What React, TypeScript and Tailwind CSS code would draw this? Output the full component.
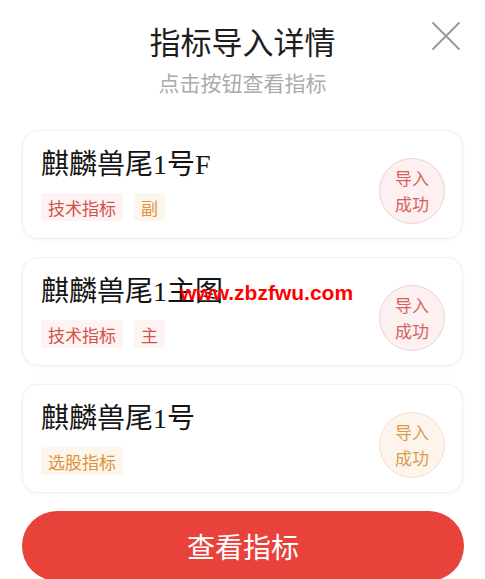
import type { ReactNode } from "react";

type Tone = "red" | "orange";

interface IndicatorItem {
	name: ReactNode;
	tags: { label: string; tone: Tone }[];
	status: Tone;
}

const items: IndicatorItem[] = [
	{
		name: "麒麟兽尾1号F",
		tags: [
			{ label: "技术指标", tone: "red" },
			{ label: "副", tone: "orange" },
		],
		status: "red",
	},
	{
		name: "麒麟兽尾1主图",
		tags: [
			{ label: "技术指标", tone: "red" },
			{ label: "主", tone: "red" },
		],
		status: "red",
	},
	{
		name: "麒麟兽尾1号",
		tags: [{ label: "选股指标", tone: "orange" }],
		status: "orange",
	},
];

function Tag({ label, tone }: { label: string; tone: Tone }) {
	const cls =
		tone === "red"
			? "bg-[#fdf3f2] text-[#d4504b]"
			: "bg-[#fdf6ec] text-[#e0923e]";
	return (
		<span
			className={`inline-flex h-[28px] items-center rounded-[3px] px-[7px] text-[17px] leading-none ${cls}`}
		>
			{label}
		</span>
	);
}

function StatusBadge({ tone }: { tone: Tone }) {
	const cls =
		tone === "red"
			? "bg-[#fcf0f0] border-[#f0d2d2] text-[#d6625e]"
			: "bg-[#fdf5ec] border-[#f2e0cc] text-[#dc9a55]";
	return (
		<div
			className={`mt-[10px] flex h-[66px] w-[66px] shrink-0 flex-col items-center justify-center rounded-full border text-[17px] leading-[26px] ${cls}`}
		>
			<span>导入</span>
			<span>成功</span>
		</div>
	);
}

export default function App() {
	return (
		<div className="relative h-[579px] w-[485px] overflow-hidden bg-white font-['Noto_Sans_CJK_SC',sans-serif]">
			{/* ヘッダー */}
			<div className="pt-[22px] text-center">
				<h1 className="text-[31px] leading-[38px] text-[#1e1e1e]">
					指标导入详情
				</h1>
				<p className="mt-[7px] text-[21px] leading-[30px] text-[#ababab]">
					点击按钮查看指标
				</p>
			</div>

			<button className="absolute right-[24px] top-[21px] h-[30px] w-[30px]">
				<svg viewBox="0 0 30 30" className="h-full w-full">
					<path
						d="M2 2 L28 28 M28 2 L2 28"
						stroke="#9a9a9a"
						strokeWidth="2"
						strokeLinecap="round"
					/>
				</svg>
			</button>

			{/* 指标カード */}
			<div className="mt-[33px] flex flex-col gap-[18px] px-[22px]">
				{items.map((item, i) => (
					<div
						key={i}
						className="flex h-[109px] items-start justify-between rounded-[16px] border border-[#f0f0f0] bg-white pl-[18px] pr-[17px] pt-[17px] shadow-[0_1px_4px_rgba(0,0,0,0.04)]"
					>
						<div>
							<div className="font-['Liberation_Serif','Noto_Sans_CJK_SC',serif] text-[28px] leading-[34px] text-[#141414]">
								{item.name}
							</div>
							<div className="mt-[11px] flex gap-[11px]">
								{item.tags.map((t) => (
									<Tag key={t.label} label={t.label} tone={t.tone} />
								))}
							</div>
						</div>
						<StatusBadge tone={item.status} />
					</div>
				))}
			</div>

			<button className="mx-[22px] mt-[18px] flex h-[70px] w-[442px] items-center justify-center rounded-full bg-[#e8423a] text-[28px] text-white">
				查看指标
			</button>

			{/* ウォーターマーク */}
			<div className="pointer-events-none absolute left-[180px] top-[277px] font-['Liberation_Sans',sans-serif] text-[21px] font-bold text-[#ff0000]">
				www.zbzfwu.com
			</div>
		</div>
	);
}
